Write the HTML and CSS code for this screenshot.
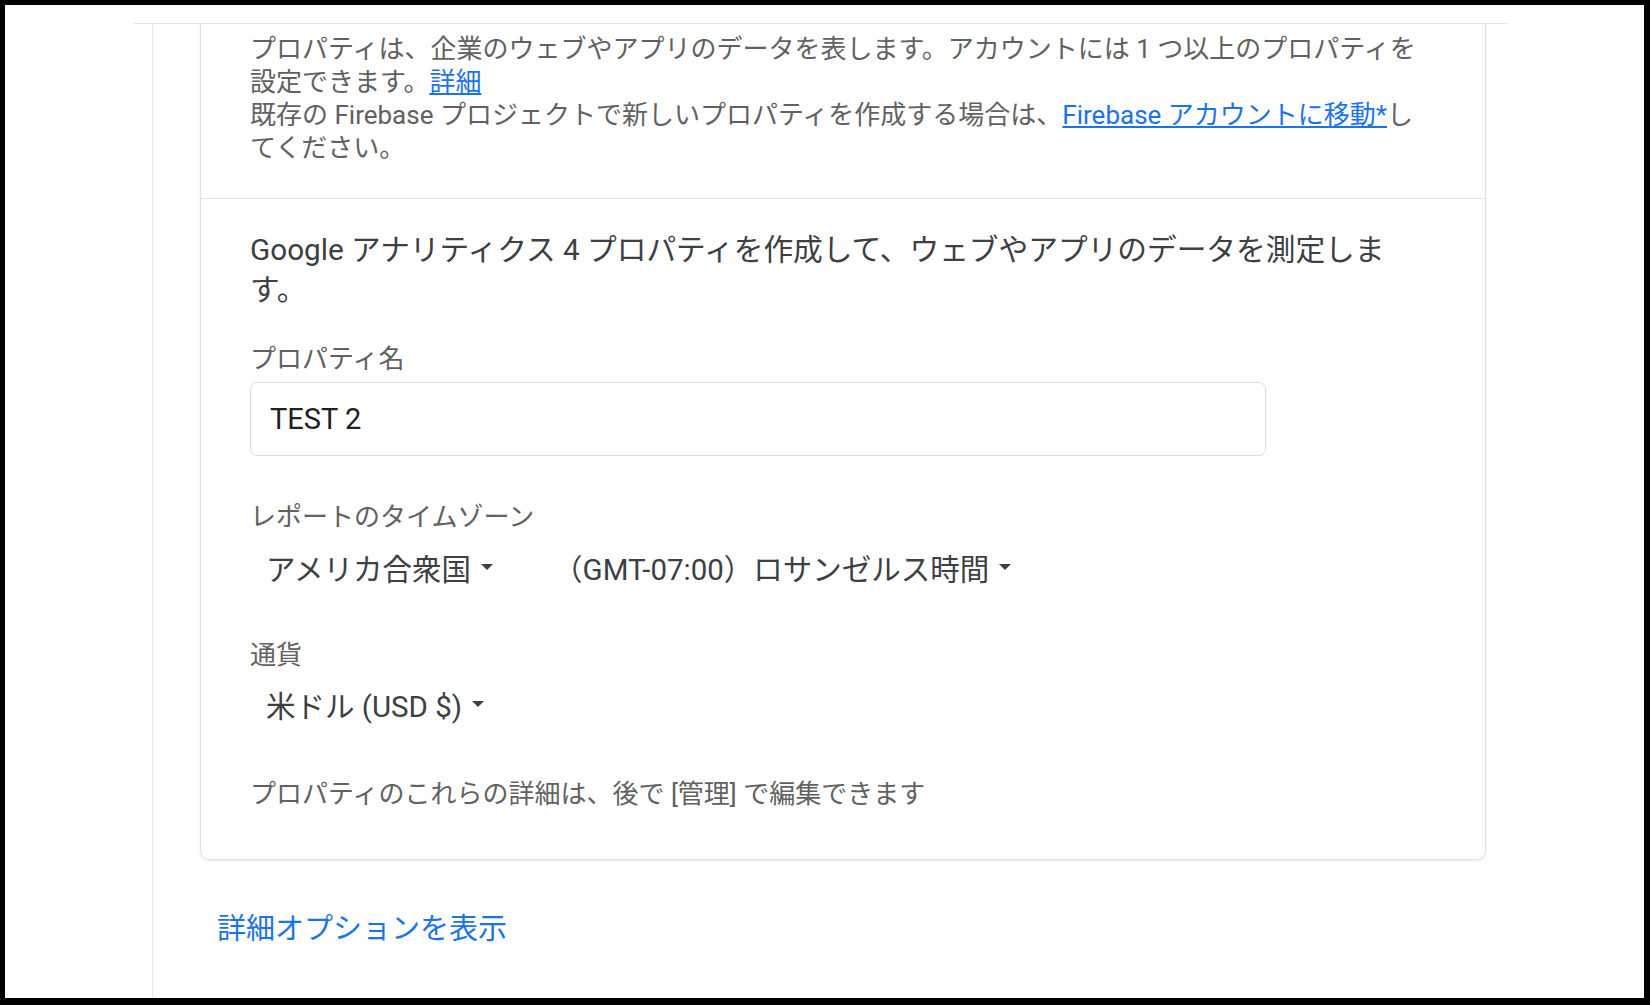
FILE: index.html
```html
<!DOCTYPE html>
<html lang="ja">
<head>
    <meta charset="UTF-8">
    <meta name="viewport" content="width=device-width, initial-scale=1.0">
    <link rel="stylesheet" href="styles.css">
    <title>プロパティの作成</title>
</head>
<body>

<div class="screen">
    <div class="panel">
        <div class="column">
            <div class="card">
                <div class="section intro">
                    <p>プロパティは、企業のウェブやアプリのデータを表します。アカウントには 1 つ以上のプロパティを設定できます。<a href="#">詳細</a></p>
                    <p>既存の Firebase プロジェクトで新しいプロパティを作成する場合は、<a href="#">Firebase アカウントに移動*</a>してください。</p>
                </div>

                <div class="section form">
                    <p class="headline">Google アナリティクス 4 プロパティを作成して、ウェブやアプリのデータを測定します。</p>

                    <div class="field field-name">
                        <label class="field-label" for="property-name">プロパティ名</label>
                        <div class="text-input">
                            <input id="property-name" type="text" value="TEST 2">
                        </div>
                    </div>

                    <div class="field">
                        <div class="field-label">レポートのタイムゾーン</div>
                        <div class="select-row">
                            <button class="select">アメリカ合衆国<span class="caret"></span></button>
                            <button class="select">（GMT-07:00）ロサンゼルス時間<span class="caret"></span></button>
                        </div>
                    </div>

                    <div class="field">
                        <div class="field-label">通貨</div>
                        <div class="select-row currency">
                            <button class="select">米ドル (USD $)<span class="caret"></span></button>
                        </div>
                    </div>

                    <p class="note">プロパティのこれらの詳細は、後で [管理] で編集できます</p>
                </div>
            </div>

            <a class="more-link" href="#">詳細オプションを表示</a>
        </div>
    </div>
</div>

</body>
</html>
```

FILE: styles.css
```css
html, body {
    margin: 0;
    padding: 0;
    height: 100%;
}

body {
    background: #000;
    font-family: Roboto, "Noto Sans CJK JP", sans-serif;
    color: #5f6368;
}

.screen {
    box-sizing: border-box;
    height: calc(100vh - 12px);
    margin: 5px 6px 7px 5px;
    padding: 18px 0 0 129px;
    background: #fff;
    overflow: hidden;
}

.panel {
    width: 1373px;
    height: 100%;
    border-top: 1px solid #e3e3e3;
}

.column {
    box-sizing: border-box;
    height: 100%;
    margin-left: 18px;
    padding-left: 47px;
    border-left: 1px solid #e6e6e6;
}

.card {
    width: 1286px;
    box-sizing: border-box;
    border: 1px solid #dfe1e5;
    border-top: none;
    border-radius: 0 0 9px 9px;
    box-shadow: 0 1px 2px rgba(60, 64, 67, 0.12);
}

.section {
    padding: 0 49px;
}

.intro {
    padding-top: 9px;
    padding-bottom: 33px;
    border-bottom: 1px solid #e3e3e3;
    font-size: 26px;
    line-height: 33px;
    color: #616161;
}

.intro p {
    margin: 0;
}

a {
    color: #1a73e8;
}

.form {
    padding-top: 31px;
    padding-bottom: 48px;
}

.headline {
    margin: 0 0 33px;
    font-size: 29.7px;
    line-height: 40px;
    color: #3c4043;
}

.field {
    margin-bottom: 52px;
}

.field-name {
    margin-bottom: 45px;
}

.field-label {
    display: block;
    font-size: 26px;
    line-height: 33px;
    color: #616161;
}

.text-input {
    box-sizing: border-box;
    width: 1016px;
    height: 74px;
    margin-top: 6px;
    padding: 0 19px;
    border: 1px solid #dadce0;
    border-radius: 7px;
    display: flex;
    align-items: center;
}

.text-input input {
    width: 100%;
    border: none;
    outline: none;
    padding: 0;
    font-family: inherit;
    font-size: 29px;
    color: #202124;
    background: transparent;
}

.select-row {
    display: flex;
    gap: 28px;
    margin-top: 13px;
}

.select-row.currency {
    margin-top: 12px;
}

.select {
    display: inline-flex;
    align-items: center;
    gap: 10px;
    height: 40px;
    padding: 0 16px;
    border: none;
    background: transparent;
    font-family: inherit;
    font-size: 29.5px;
    color: #3c4043;
}

.caret {
    width: 0;
    height: 0;
    border-left: 6px solid transparent;
    border-right: 6px solid transparent;
    border-top: 6px solid #3c4043;
}

.note {
    margin: 54px 0 0;
    font-size: 26px;
    line-height: 33px;
    color: #616161;
}

.more-link {
    display: inline-block;
    margin: 49px 0 0 17px;
    font-size: 29px;
    line-height: 40px;
    text-decoration: none;
}
```
